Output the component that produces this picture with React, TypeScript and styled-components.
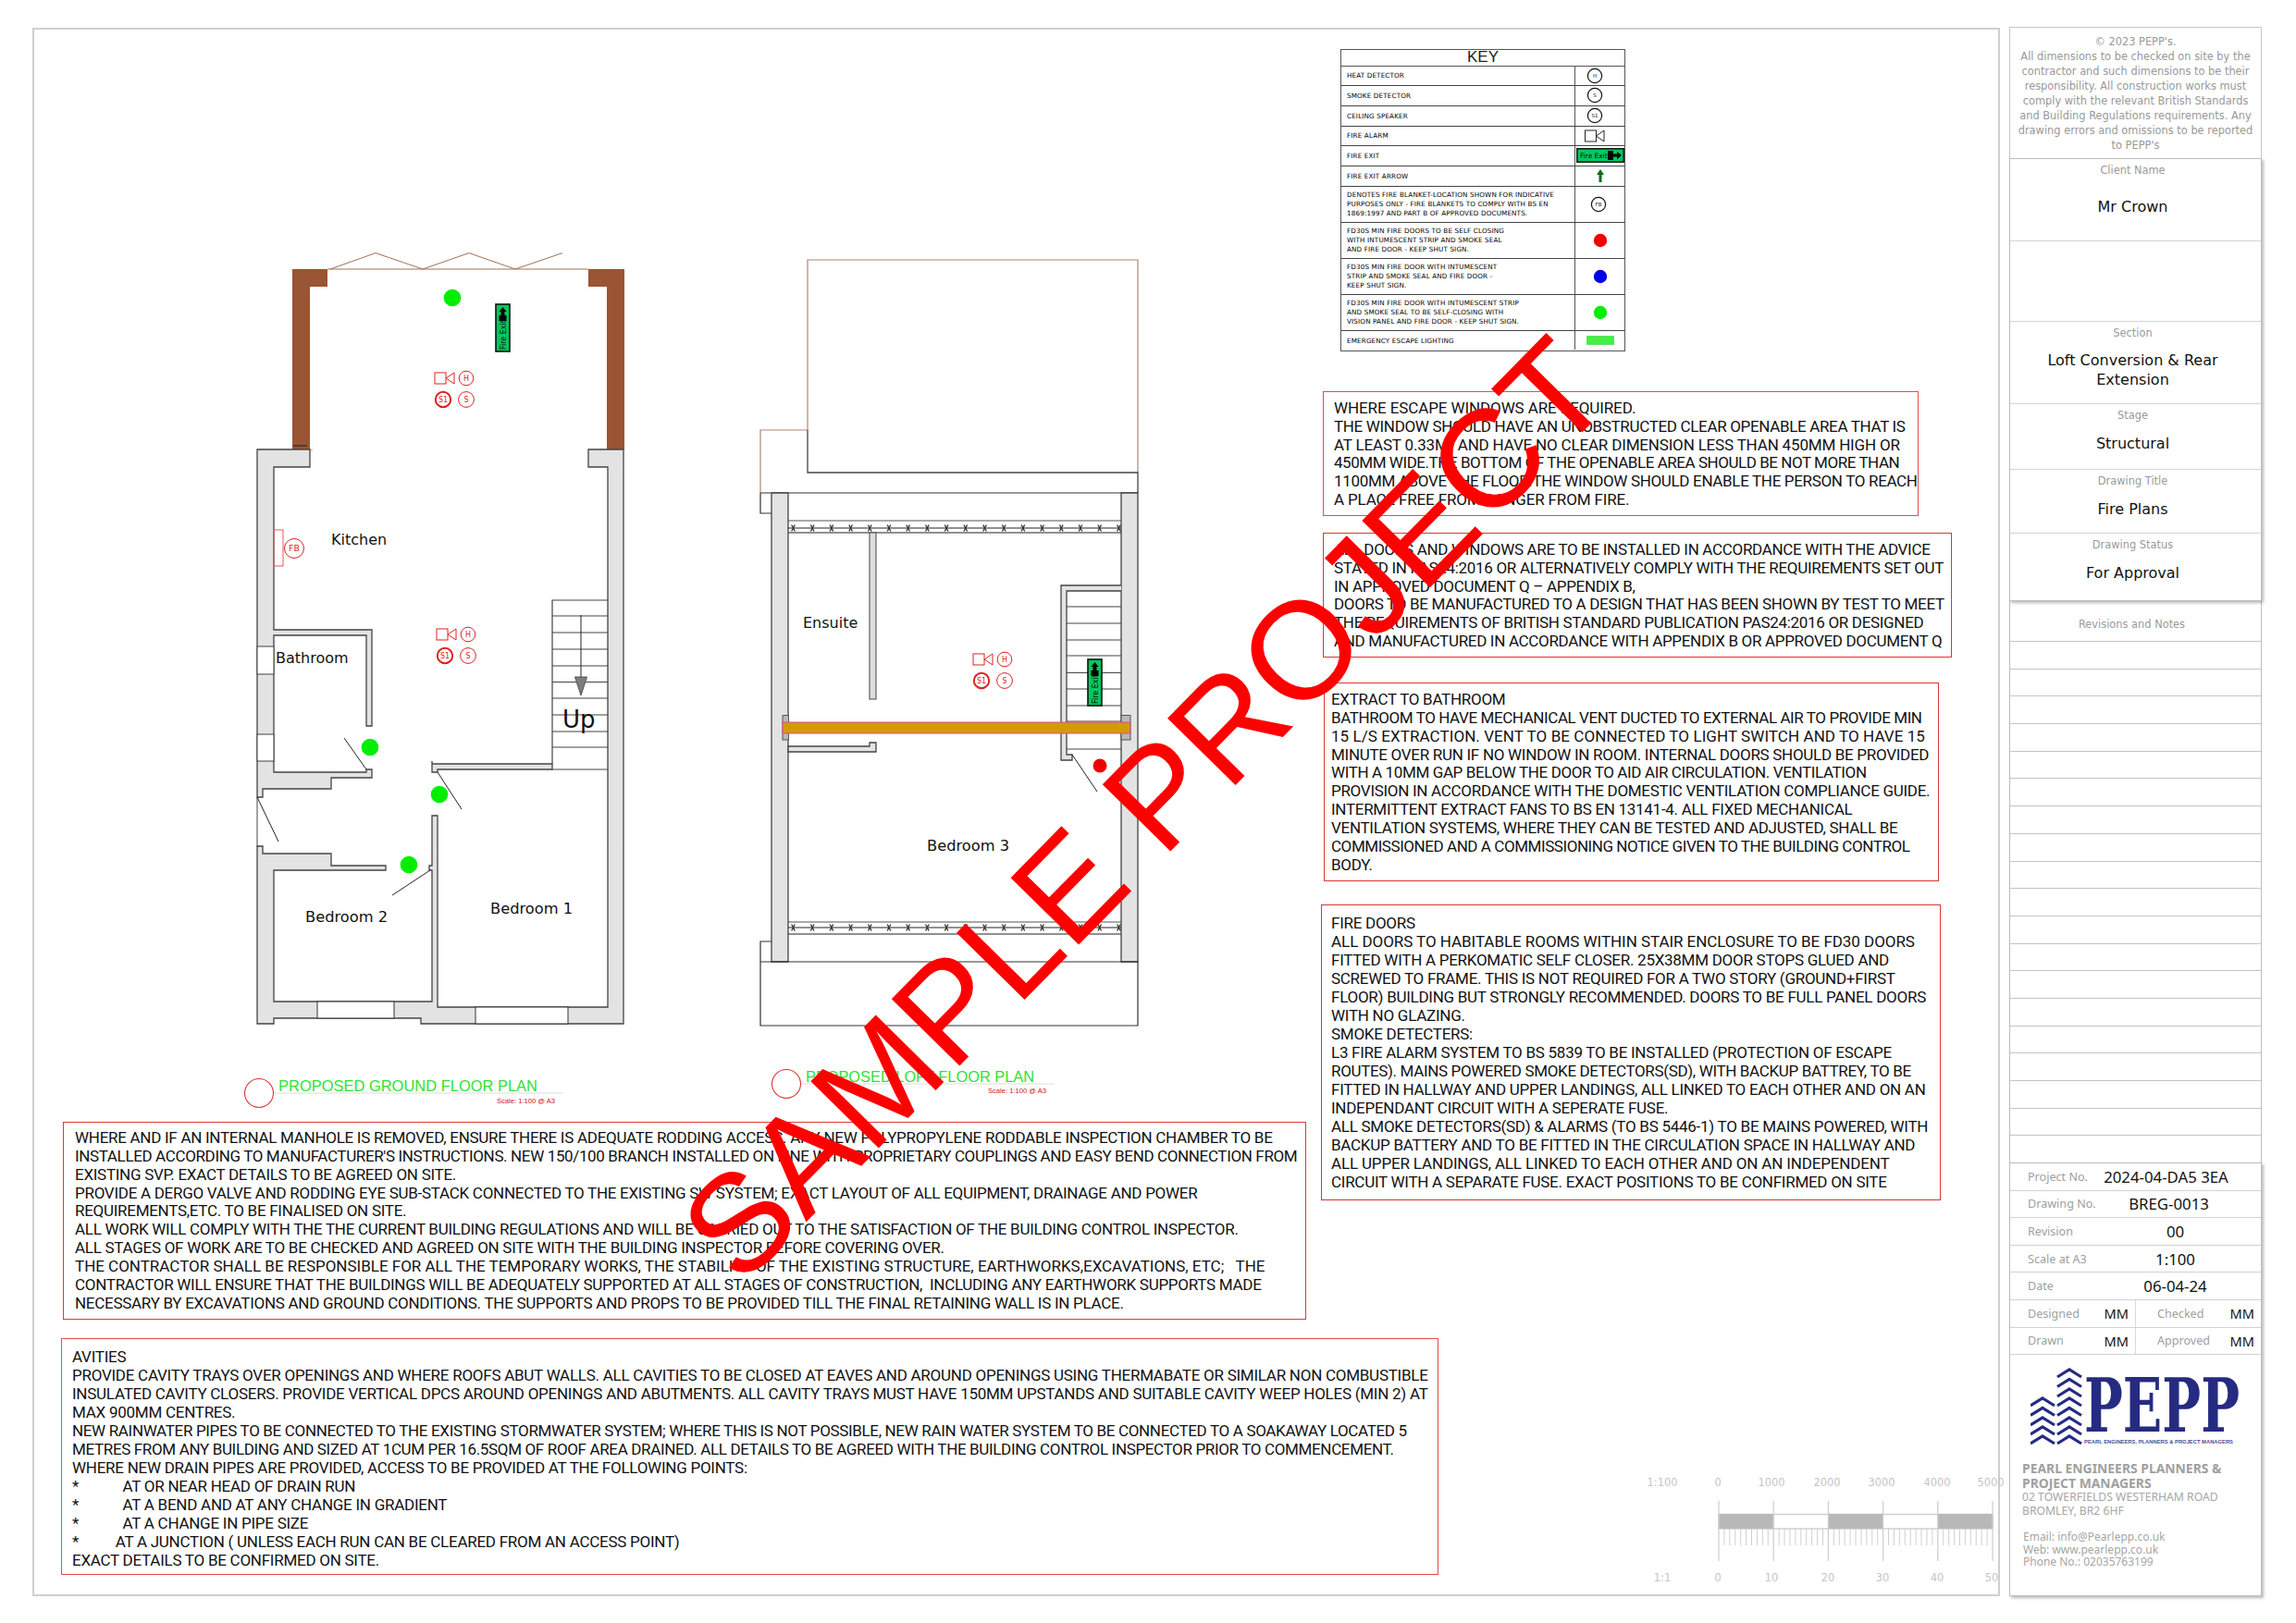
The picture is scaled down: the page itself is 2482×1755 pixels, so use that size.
import React from "react";
import styled, { createGlobalStyle } from "styled-components";

const Global = createGlobalStyle`
  html, body { margin: 0; padding: 0; background: #fff; }
  #root { width: 2482px; height: 1755px; }
`;

const Page = styled.div`
  position: relative;
  width: 2482px;
  height: 1755px;
  background: #fff;
  box-sizing: border-box;
  padding: 29px 37px 29px 35px;
  display: flex;
  gap: 10px;
  overflow: hidden;
  font-family: "DejaVu Sans", sans-serif;
`;

const Sheet = styled.div`
  box-sizing: border-box;
  width: 2127px;
  margin-top: 1px;
  height: 1696px;
  border: 2px solid #cfcfcf;
  display: grid;
  grid-template-columns: 1388px 735px;
`;

const LeftColumn = styled.div`
  display: flex;
  flex-direction: column;
  min-width: 0;
`;

const RightColumn = styled.div`
  display: flex;
  flex-direction: column;
  padding-top: 21px;
`;

const PlanSvg = styled.svg`
  display: block;
  flex: none;
  overflow: visible;
`;

const Note = styled.div<{ $w: number; $h: number; $ml: number; $mt: number; $pt: number; $pl: number; $ls: number; $c: string; $lh?: number }>`
  box-sizing: border-box;
  flex: none;
  width: ${(p) => p.$w}px;
  height: ${(p) => p.$h}px;
  margin-left: ${(p) => p.$ml}px;
  margin-top: ${(p) => p.$mt}px;
  padding: ${(p) => p.$pt}px 0 0 ${(p) => p.$pl}px;
  border: 1.5px solid ${(p) => p.$c};
  background: transparent;
  font-family: Roboto, "Liberation Sans", sans-serif;
  font-size: 17px;
  line-height: ${(p) => p.$lh ?? 20}px;
  letter-spacing: ${(p) => p.$ls}px;
  color: #111;
`;

const NoteLine = styled.div<{ $ls?: number }>`
  white-space: pre;
  ${(p) => (p.$ls === undefined ? "" : `letter-spacing: ${p.$ls}px;`)}
`;

const KeyTable = styled.div`
  box-sizing: border-box;
  flex: none;
  width: 308px;
  height: 327px;
  margin-left: 24px;
  border: 1.5px solid #555;
  display: flex;
  flex-direction: column;
`;

const KeyHeader = styled.div`
  box-sizing: border-box;
  height: 17.5px;
  border-bottom: 1.5px solid #555;
  text-align: center;
  font-family: "Liberation Sans", sans-serif;
  font-size: 17px;
  line-height: 15px;
  color: #222;
`;

const KeyRow = styled.div<{ $h: number }>`
  box-sizing: border-box;
  height: ${(p) => p.$h}px;
  display: grid;
  grid-template-columns: 253px 1fr;
  border-bottom: 1.5px solid #444;
  &:last-child { border-bottom: 0; }
`;

const KeyLabel = styled.div`
  box-sizing: border-box;
  padding: 1.5px 0 0 6px;
  border-right: 1.5px solid #555;
  display: flex;
  align-items: center;
  white-space: pre-line;
  font-family: "DejaVu Sans", sans-serif;
  font-size: 7.2px;
  line-height: 10px;
  letter-spacing: 0.15px;
  color: #000;
`;

const KeySymbol = styled.div<{ $shift?: number }>`
  display: flex;
  align-items: center;
  justify-content: center;
  padding-right: ${(p) => p.$shift ?? 0}px;
`;

const ScaleSvg = styled.svg`
  display: block;
  flex: none;
  margin: auto 0 9px 310px;
  overflow: visible;
`;

const TitleColumn = styled.div`
  flex: none;
  width: 273px;
  height: 1697px;
  display: flex;
  flex-direction: column;
`;

const Copyright = styled.div`
  box-sizing: border-box;
  height: 142px;
  border: 1.5px solid #c6c6c6;
  border-bottom: 0;
  padding: 6.5px 0 0 0;
  text-align: center;
  font-size: 11.4px;
  line-height: 16px;
  color: #999;
  white-space: pre;
`;

const Card = styled.div<{ $h?: number }>`
  box-sizing: border-box;
  ${(p) => (p.$h ? `height: ${p.$h}px;` : "flex: 1;")}
  border: 1px solid #bdbdbd;
  box-shadow: 2px 2px 3px rgba(0, 0, 0, 0.28);
  display: flex;
  flex-direction: column;
  position: relative;
  background: #fff;
`;

const InfoBlock = styled.div<{ $h: number }>`
  box-sizing: border-box;
  height: ${(p) => p.$h}px;
  border-bottom: 1.5px solid #d4d4d4;
  &:last-child { border-bottom: 0; }
  padding: 0 30px 0 24px;
  text-align: center;
`;

const InfoLabel = styled.div`
  font-size: 11.4px;
  line-height: 14px;
  padding-top: 5px;
  color: #9a9a9a;
`;

const InfoValue = styled.div<{ $mt: number }>`
  margin-top: ${(p) => p.$mt}px;
  font-size: 16px;
  line-height: 21px;
  color: #111;
`;

const Revisions = styled.div`
  box-sizing: border-box;
  height: 607px;
  border-left: 1.5px solid #bdbdbd;
  border-right: 1.5px solid #bdbdbd;
  display: flex;
  flex-direction: column;
`;

const RevisionsHeader = styled.div`
  height: 43px;
  padding-right: 8px;
  flex: none;
  text-align: center;
  font-size: 11.4px;
  line-height: 50px;
  color: #9a9a9a;
`;

const RevisionRow = styled.div`
  flex: 1;
  border-top: 1px solid #c4c4c4;
`;

const FactRow = styled.div`
  box-sizing: border-box;
  height: 29.6px;
  flex: none;
  padding-left: 19px;
  border-bottom: 1.5px solid #d2d2d2;
  display: flex;
  align-items: center;
  font-family: "Noto Sans", sans-serif;
`;

const FactLabel = styled.span`
  font-size: 12.6px;
  color: #a0a0a0;
  width: 66px;
  white-space: nowrap;
`;

const FactValue = styled.span<{ $shift?: number }>`
  flex: 1;
  text-align: center;
  padding-right: ${(p) => p.$shift ?? 0}px;
  padding-left: 1px;
  font-size: 16.8px;
  color: #111;
  white-space: nowrap;
`;

const SplitRow = styled.div`
  box-sizing: border-box;
  height: 29.6px;
  flex: none;
  display: grid;
  grid-template-columns: 135px 1fr;
  border-bottom: 1.5px solid #d2d2d2;
  font-family: "Noto Sans", sans-serif;
`;

const SplitCell = styled.div<{ $pl: number; $right?: boolean }>`
  display: flex;
  align-items: center;
  justify-content: space-between;
  padding: 0 7px 0 ${(p) => p.$pl}px;
  ${(p) => (p.$right ? "border-left: 1.5px solid #d8d8d8;" : "")}
  font-size: 12.6px;
  color: #a0a0a0;
`;

const Initials = styled.span`
  font-size: 14.6px;
  color: #111;
`;

const LogoSvg = styled.svg`
  display: block;
  flex: none;
  margin: 12px 0 0 22px;
`;

const Firm = styled.div`
  margin: 13px 0 0 13px;
  font-family: "Noto Sans", sans-serif;
  color: #a6a6a6;
`;

const FirmName = styled.div`
  font-size: 13.9px;
  font-weight: 700;
  line-height: 15.6px;
  white-space: pre-line;
  color: #a0a0a0;
`;

const FirmAddress = styled.div`
  margin-top: -0.5px;
  font-size: 12.2px;
  line-height: 15.6px;
  white-space: pre-line;
`;

const FirmContact = styled.div`
  margin: 13px 0 0 1px;
  font-size: 12px;
  line-height: 13.5px;
  white-space: pre-line;
`;

const Stamp = styled.div`
  position: absolute;
  left: 801px;
  top: 1266px;
  font-family: "Liberation Sans", Arial, sans-serif;
  font-size: 150px;
  line-height: 1;
  color: #ff0000;
  white-space: nowrap;
  transform-origin: 0 127px;
  transform: rotate(-45.5deg);
  pointer-events: none;
`;

type L = string | [string, number];

const A: L[] = [["WHERE ESCAPE WINDOWS ARE REQUIRED.", -0.1],"THE WINDOW SHOULD HAVE AN UNOBSTRUCTED CLEAR OPENABLE AREA THAT IS",["AT LEAST 0.33M² AND HAVE NO CLEAR DIMENSION LESS THAN 450MM HIGH OR", -0.175],["450MM WIDE.THE BOTTOM OF THE OPENABLE AREA SHOULD BE NOT MORE THAN", -0.455],"1100MM ABOVE THE FLOOR.THE WINDOW SHOULD ENABLE THE PERSON TO REACH",["A PLACE FREE FROM DANGER FROM FIRE.", -0.155]];
const B: L[] = ["ALL DOORS AND WINDOWS ARE TO BE INSTALLED IN ACCORDANCE WITH THE ADVICE","STATED IN PAS24:2016 OR ALTERNATIVELY COMPLY WITH THE REQUIREMENTS SET OUT","IN APPROVED DOCUMENT Q – APPENDIX B,","DOORS TO BE MANUFACTURED TO A DESIGN THAT HAS BEEN SHOWN BY TEST TO MEET","THE REQUIREMENTS OF BRITISH STANDARD PUBLICATION PAS24:2016 OR DESIGNED","AND MANUFACTURED IN ACCORDANCE WITH APPENDIX B OR APPROVED DOCUMENT Q"];
const C: L[] = ["EXTRACT TO BATHROOM",["BATHROOM TO HAVE MECHANICAL VENT DUCTED TO EXTERNAL AIR TO PROVIDE MIN", -0.42],["15 L/S EXTRACTION. VENT TO BE CONNECTED TO LIGHT SWITCH AND TO HAVE 15", 0.07],"MINUTE OVER RUN IF NO WINDOW IN ROOM. INTERNAL DOORS SHOULD BE PROVIDED",["WITH A 10MM GAP BELOW THE DOOR TO AID AIR CIRCULATION. VENTILATION", -0.38],"PROVISION IN ACCORDANCE WITH THE DOMESTIC VENTILATION COMPLIANCE GUIDE.","INTERMITTENT EXTRACT FANS TO BS EN 13141-4. ALL FIXED MECHANICAL","VENTILATION SYSTEMS, WHERE THEY CAN BE TESTED AND ADJUSTED, SHALL BE",["COMMISSIONED AND A COMMISSIONING NOTICE GIVEN TO THE BUILDING CONTROL", -0.44],"BODY."];
const D: L[] = ["FIRE DOORS",["ALL DOORS TO HABITABLE ROOMS WITHIN STAIR ENCLOSURE TO BE FD30 DOORS", -0.05],"FITTED WITH A PERKOMATIC SELF CLOSER. 25X38MM DOOR STOPS GLUED AND","SCREWED TO FRAME. THIS IS NOT REQUIRED FOR A TWO STORY (GROUND+FIRST","FLOOR) BUILDING BUT STRONGLY RECOMMENDED. DOORS TO BE FULL PANEL DOORS","WITH NO GLAZING.","SMOKE DETECTERS:","L3 FIRE ALARM SYSTEM TO BS 5839 TO BE INSTALLED (PROTECTION OF ESCAPE",["ROUTES). MAINS POWERED SMOKE DETECTORS(SD), WITH BACKUP BATTREY, TO BE", -0.35],"FITTED IN HALLWAY AND UPPER LANDINGS, ALL LINKED TO EACH OTHER AND ON AN","INDEPENDANT CIRCUIT WITH A SEPERATE FUSE.","ALL SMOKE DETECTORS(SD) & ALARMS (TO BS 5446-1) TO BE MAINS POWERED, WITH","BACKUP BATTERY AND TO BE FITTED IN THE CIRCULATION SPACE IN HALLWAY AND",["ALL UPPER LANDINGS, ALL LINKED TO EACH OTHER AND ON AN INDEPENDENT", -0.16],"CIRCUIT WITH A SEPARATE FUSE. EXACT POSITIONS TO BE CONFIRMED ON SITE"];
const E: L[] = ["WHERE AND IF AN INTERNAL MANHOLE IS REMOVED, ENSURE THERE IS ADEQUATE RODDING ACCESS. ANY NEW POLYPROPYLENE RODDABLE INSPECTION CHAMBER TO BE",["INSTALLED ACCORDING TO MANUFACTURER'S INSTRUCTIONS. NEW 150/100 BRANCH INSTALLED ON LINE WITH PROPRIETARY COUPLINGS AND EASY BEND CONNECTION FROM", -0.365],"EXISTING SVP. EXACT DETAILS TO BE AGREED ON SITE.","PROVIDE A DERGO VALVE AND RODDING EYE SUB-STACK CONNECTED TO THE EXISTING SW SYSTEM; EXACT LAYOUT OF ALL EQUIPMENT, DRAINAGE AND POWER","REQUIREMENTS,ETC. TO BE FINALISED ON SITE.","ALL WORK WILL COMPLY WITH THE THE CURRENT BUILDING REGULATIONS AND WILL BE CARRIED OUT TO THE SATISFACTION OF THE BUILDING CONTROL INSPECTOR.","ALL STAGES OF WORK ARE TO BE CHECKED AND AGREED ON SITE WITH THE BUILDING INSPECTOR BEFORE COVERING OVER.",["THE CONTRACTOR SHALL BE RESPONSIBLE FOR ALL THE TEMPORARY WORKS, THE STABILITY OF THE EXISTING STRUCTURE, EARTHWORKS,EXCAVATIONS, ETC;   THE", -0.01],"CONTRACTOR WILL ENSURE THAT THE BUILDINGS WILL BE ADEQUATELY SUPPORTED AT ALL STAGES OF CONSTRUCTION,  INCLUDING ANY EARTHWORK SUPPORTS MADE","NECESSARY BY EXCAVATIONS AND GROUND CONDITIONS. THE SUPPORTS AND PROPS TO BE PROVIDED TILL THE FINAL RETAINING WALL IS IN PLACE."];
const F: L[] = ["AVITIES","PROVIDE CAVITY TRAYS OVER OPENINGS AND WHERE ROOFS ABUT WALLS. ALL CAVITIES TO BE CLOSED AT EAVES AND AROUND OPENINGS USING THERMABATE OR SIMILAR NON COMBUSTIBLE","INSULATED CAVITY CLOSERS. PROVIDE VERTICAL DPCS AROUND OPENINGS AND ABUTMENTS. ALL CAVITY TRAYS MUST HAVE 150MM UPSTANDS AND SUITABLE CAVITY WEEP HOLES (MIN 2) AT","MAX 900MM CENTRES.",["NEW RAINWATER PIPES TO BE CONNECTED TO THE EXISTING STORMWATER SYSTEM; WHERE THIS IS NOT POSSIBLE, NEW RAIN WATER SYSTEM TO BE CONNECTED TO A SOAKAWAY LOCATED 5", -0.34],["METRES FROM ANY BUILDING AND SIZED AT 1CUM PER 16.5SQM OF ROOF AREA DRAINED. ALL DETAILS TO BE AGREED WITH THE BUILDING CONTROL INSPECTOR PRIOR TO COMMENCEMENT.", -0.35],"WHERE NEW DRAIN PIPES ARE PROVIDED, ACCESS TO BE PROVIDED AT THE FOLLOWING POINTS:","*            AT OR NEAR HEAD OF DRAIN RUN","*            AT A BEND AND AT ANY CHANGE IN GRADIENT","*            AT A CHANGE IN PIPE SIZE","*          AT A JUNCTION ( UNLESS EACH RUN CAN BE CLEARED FROM AN ACCESS POINT)","EXACT DETAILS TO BE CONFIRMED ON SITE."];

const lines = (items: L[]) =>
  items.map((t, i) => (typeof t === "string" ? <NoteLine key={i}>{t}</NoteLine> : <NoteLine key={i} $ls={t[1]}>{t[0]}</NoteLine>));

const WALL = { fill: "#e3e3e3", stroke: "#444", strokeWidth: 1.3 };
const INK = { stroke: "#222", strokeWidth: 1, fill: "none" };
const RED = "#dd2222";

const Sym = ({ x, y, r, t, w = 1, c = RED, s = 8 }: { x: number; y: number; r: number; t: string; w?: number; c?: string; s?: number }) => (
  <g>
    <circle cx={x} cy={y} r={r} fill="#fff" stroke={c} strokeWidth={w} />
    <text x={x} y={y + s * 0.36} textAnchor="middle" fontSize={s} fontFamily="DejaVu Sans, sans-serif" fill={c}>{t}</text>
  </g>
);

const AlarmSet = ({ x, y }: { x: number; y: number }) => (
  <g transform={`translate(${x} ${y})`}>
    <rect x="0" y="0" width="12" height="12" fill="none" stroke={RED} strokeWidth="1" />
    <path d="M12 6 L21 0 L21 12 Z" fill="none" stroke={RED} strokeWidth="1" />
    <Sym x={34} y={6} r={7.8} t="H" />
    <Sym x={9} y={29} r={8.2} t="S1" w={2} />
    <Sym x={34} y={29} r={8.4} t="S" />
  </g>
);

const ExitSign = ({ x, y, h }: { x: number; y: number; h: number }) => (
  <g transform={`translate(${x} ${y})`}>
    <rect x="0" y="0" width="15" height={h} fill="#00c85f" stroke="#111" strokeWidth="1.6" />
    <path d="M7.5 3 L11.5 8 L9.5 8 L9.5 12 L5.5 12 L5.5 8 L3.5 8 Z" fill="#000" />
    <rect x="3.5" y="12" width="8" height="6" fill="#000" />
    <text transform={`translate(10.5 ${h - 2}) rotate(-90)`} fontSize="8" fontFamily="DejaVu Sans, sans-serif" fill="#111">Fire Exit</text>
  </g>
);

const PlanTitle = ({ cx, cy, tx, ty, tw, t, ux2, sx, sy }: { cx: number; cy: number; tx: number; ty: number; tw: number; t: string; ux2: number; sx: number; sy: number }) => (
  <g>
    <circle cx={cx} cy={cy} r={15.5} fill="#fff" stroke="#dd3333" strokeWidth="1.1" />
    <line x1={cx + 16} y1={cy} x2={ux2} y2={cy} stroke="#e8e8e8" strokeWidth="1.5" />
    <text x={tx} y={ty} fontSize="17" fontFamily="Liberation Sans, sans-serif" fill="#2fe22f" textLength={tw} lengthAdjust="spacingAndGlyphs">{t}</text>
    <text x={sx} y={sy} fontSize="7.6" fontFamily="Liberation Sans, sans-serif" fill="#cc1111">Scale: 1:100 @ A3</text>
  </g>
);

const Room = ({ x, y, t, s = 16 }: { x: number; y: number; t: string; s?: number }) => (
  <text x={x} y={y} fontSize={s} fontFamily="DejaVu Sans, sans-serif" fill="#111">{t}</text>
);

const Joists = ({ top, mid, bottom }: { top: number; mid: number; bottom: number }) => (
  <g>
    <line x1="852" y1={top} x2="1212" y2={top} stroke="#555" strokeWidth="1.2" />
    <line x1="852" y1={mid} x2="1212" y2={mid} stroke="#222" strokeWidth="1" />
    <line x1="852" y1={bottom} x2="1212" y2={bottom} stroke="#222" strokeWidth="1.2" />
    {Array.from({ length: 18 }, (_, i) => 857.5 + i * 20.7).map((x) => (
      <path key={x} d={`M${x - 1.8} ${mid - 3.5} L${x + 1.8} ${mid + 3.5} M${x + 1.8} ${mid - 3.5} L${x - 1.8} ${mid + 3.5}`} stroke="#3a3020" strokeWidth="1.3" />
    ))}
  </g>
);

const Plans = () => (
  <PlanSvg width={1388} height={1181} viewBox="37 32 1388 1181">
    <path d="M316 291 H354 V310 H335 V486 H316 Z M636 291 H675 V486 H656 V310 H636 Z" fill="#9a5534" />
    <path d="M354 291 H636 M357 291 L406 273.6 L457 291 L507 273.6 L557 291 L608 273.6" stroke="#a07058" strokeWidth="1" fill="none" />
    <line x1="308" y1="486.5" x2="338" y2="486.5" stroke="#d8c040" strokeWidth="1" />
    <line x1="317" y1="482" x2="332" y2="482" stroke="#222" strokeWidth="1" />
    <path {...WALL} d="M278 486 H335 V505 H296 V681 H402 V785 H396 V687 H296 V835 H396 V832 H402 V841 H358 V853 H284 V862 H278 Z" />
    <path {...WALL} d="M278 915 H284 V923 H358 V936 H417 V941 H296 V1083 H467 V941 H464 V936 H467 V882 H473 V1089 H657 V505 H636 V486 H674 V1107 H455 V1101 H296 V1107 H278 Z" />
    <path {...WALL} d="M467 823 V826 H597 V832 H473 V835 H467 Z" />
    <rect x="278" y="699" width="18" height="30" fill="#fff" stroke="#444" />
    <rect x="278" y="794" width="18" height="29" fill="#fff" stroke="#444" />
    <rect x="343" y="1083" width="83" height="18" fill="#fff" stroke="#333" />
    <rect x="514" y="1089" width="100" height="18" fill="#fff" stroke="#333" />
    <line x1="278" y1="862" x2="278" y2="915" stroke="#444" />
    <path d="M597 826 V649 H657" {...INK} stroke="#444" strokeWidth="1.2" />
    {[666, 684, 702, 720, 737.5, 755, 773, 791, 808].map((y) => <line key={y} x1="597" y1={y} x2="657" y2={y} stroke="#444" strokeWidth="1.1" />)}
    <line x1="597" y1="832" x2="657" y2="832" stroke="#444" strokeWidth="1.1" />
    <line x1="628" y1="665" x2="628" y2="735" stroke="#222" strokeWidth="1" />
    <path d="M621.5 732 H634.5 L628 752 Z" fill="#7d7d7d" stroke="#555" />
    <Room x={608} y={787} t="Up" s={26} />
    <path {...INK} d="M372 798 L396 832 M473 835 L499 875 M465 941 L424 968 M278 862 L301 910" />
    <circle cx="489" cy="322" r="9.3" fill="#00ee00" />
    <circle cx="400" cy="808" r="9.3" fill="#00ee00" />
    <circle cx="475" cy="859" r="9.3" fill="#00ee00" />
    <circle cx="442" cy="935" r="9.3" fill="#00ee00" />
    <ExitSign x={536} y={329} h={51} />
    <AlarmSet x={470} y={403} />
    <AlarmSet x={472} y={680} />
    <rect x="296" y="573" width="10" height="39" fill="none" stroke="#ee5555" />
    <Sym x={318} y={593} r={10.5} t="FB" s={9.5} />
    <Room x={358} y={589} t="Kitchen" />
    <Room x={298} y={717} t="Bathroom" />
    <Room x={330} y={997} t="Bedroom 2" s={16.3} />
    <Room x={530} y={988} t="Bedroom 1" s={16.3} />
    <PlanTitle cx={280} cy={1182} tx={301} ty={1180} tw={280} t="PROPOSED GROUND FLOOR PLAN" ux2={609} sx={537} sy={1193} />

    <path d="M873 465 V281 H1230 V511" fill="none" stroke="#b08570" strokeWidth="1.2" />
    <path d="M822 533 V465 H873" fill="none" stroke="#b08570" strokeWidth="1.2" />
    <path d="M873 465 V511 H1230 V533" fill="none" stroke="#444" strokeWidth="1.3" />
    <path d="M822 533 H1230 M822 533 V555 H834" fill="none" stroke="#333" strokeWidth="1.2" />
    <path {...WALL} d="M834 533 H852 V1040 H834 Z" />
    <path {...WALL} d="M1212 533 H1230 V1040 H1212 Z" />
    <Joists top={563} mid={571} bottom={576} />
    <Joists top={997} mid={1003} bottom={1010} />
    <rect x="940" y="576" width="7" height="180" fill="#dedede" stroke="#444" />
    <path {...WALL} d="M852 807 H940 V803 H947 V813 H852 Z" />
    <path d="M1212 633 H1147 V822 H1159 V816 H1153 V639 H1212" {...WALL} />
    {[656, 674, 692, 709, 727.5, 745, 763, 780, 810].map((y) => <line key={y} x1="1153" y1={y} x2="1212" y2={y} stroke="#444" strokeWidth="1.1" />)}
    <line x1="1159" y1="816" x2="1186" y2="856" {...INK} />
    <circle cx="1189" cy="828" r="7.5" fill="#f00000" />
    <rect x="846" y="773.5" width="6.5" height="26.5" fill="#b9b9b9" stroke="#555" />
    <rect x="1212" y="773.5" width="10" height="26.5" fill="#b9b9b9" stroke="#555" />
    <rect x="846" y="781" width="376" height="12" fill="#d39b00" stroke="#e0479f" strokeWidth="1" />
    <path d="M822 1040 H1230 V1109 H822 Z M822 1040 V1018 H834" fill="none" stroke="#333" strokeWidth="1.2" />
    <ExitSign x={1176} y={713} h={50} />
    <AlarmSet x={1052} y={707} />
    <Room x={868} y={679} t="Ensuite" />
    <Room x={1002} y={920} t="Bedroom 3" s={16.3} />
    <PlanTitle cx={850} cy={1172} tx={871} ty={1170} tw={247} t="PROPOSED LOFT FLOOR PLAN" ux2={1140} sx={1068} sy={1182} />
  </PlanSvg>
);

const SMALL = { fontFamily: "DejaVu Sans, sans-serif" };

const ScaleBar = () => {
  const majors = [1858, 1917.2, 1976.4, 2035.6, 2094.8, 2154];
  return (
    <ScaleSvg width={430} height={125} viewBox="1735 1590 430 125">
      {[[1797, "1:100"], [1857, "0"], [1915, "1000"], [1975, "2000"], [2034, "3000"], [2094, "4000"], [2152, "5000"]].map(([x, t]) => (
        <text key={String(t)} x={x as number} y={1607} textAnchor="middle" fontSize="11.4" fill="#c4c4c4" {...SMALL}>{t}</text>
      ))}
      {[[1797, "1:1"], [1857, "0"], [1915, "10"], [1976, "20"], [2035, "30"], [2094, "40"], [2153, "50"]].map(([x, t]) => (
        <text key={String(t)} x={x as number} y={1710} textAnchor="middle" fontSize="11.4" fill="#c4c4c4" {...SMALL}>{t}</text>
      ))}
      <rect x="1858" y="1637.5" width="296" height="15.5" fill="none" stroke="#d0d0d0" strokeWidth="1.5" />
      {[0, 2, 4].map((i) => <rect key={i} x={majors[i]} y="1637" width="59.5" height="16" fill="#b8b8b8" />)}
      {majors.map((x) => <line key={x} x1={x} y1="1623" x2={x} y2="1688" stroke="#cfcfcf" strokeWidth="1.3" />)}
      {Array.from({ length: 50 }, (_, i) => 1858 + i * 5.92).filter((_, i) => i % 10 !== 0).map((x) => (
        <line key={x} x1={x} y1="1653" x2={x} y2="1671" stroke="#d0d0d0" strokeWidth="1" />
      ))}
    </ScaleSvg>
  );
};

const Chevrons = ({ x, tops }: { x: number; tops: number[] }) => (
  <g fill="none" stroke="#262b82" strokeWidth="3.2">
    {tops.map((y) => <path key={y} d={`M${x - 13} ${y + 10} L${x} ${y + 2} L${x + 13} ${y + 10}`} />)}
  </g>
);

const Logo = () => (
  <LogoSvg width={230} height={90} viewBox="2195 1474 230 90">
    <Chevrons x={2208} tops={[1507, 1517.5, 1528, 1538, 1548]} />
    <Chevrons x={2237} tops={[1476, 1486.5, 1497, 1507, 1517.5, 1528, 1538, 1548]} />
    <text x="2253" y="1545" fontSize="81" fontWeight="700" fontFamily="DejaVu Serif, serif" fill="#262b82" textLength="168" lengthAdjust="spacingAndGlyphs">PEPP</text>
    <text x="2253" y="1558" fontSize="5.6" fontWeight="700" fontFamily="Liberation Sans, sans-serif" fill="#4a4e96" textLength="161" lengthAdjust="spacingAndGlyphs">PEARL ENGINEERS, PLANNERS &amp; PROJECT MANAGERS</text>
  </LogoSvg>
);

const Circle = ({ t }: { t: string }) => (
  <svg width="18" height="18" viewBox="0 0 18 18">
    <circle cx="9" cy="9" r="7.6" fill="none" stroke="#111" strokeWidth="1.2" />
    <text x="9" y="11" textAnchor="middle" fontSize="5.5" fontFamily="DejaVu Sans, sans-serif" fill="#111">{t}</text>
  </svg>
);

const Dot = ({ c }: { c: string }) => (
  <svg width="16" height="16" viewBox="0 0 16 16"><circle cx="8" cy="8" r="7.2" fill={c} /></svg>
);

const keyRows: { h: number; label: string; icon: React.ReactNode; shift?: number }[] = [
  { h: 21, label: "HEAT DETECTOR", icon: <Circle t="H" />, shift: 12 },
  { h: 22, label: "SMOKE DETECTOR", icon: <Circle t="S" />, shift: 12 },
  { h: 22, label: "CEILING SPEAKER", icon: <Circle t="S1" />, shift: 12 },
  { h: 21, label: "FIRE ALARM", icon: (
    <svg width="22" height="14" viewBox="0 0 22 14"><rect x="0.5" y="1" width="12" height="12" fill="none" stroke="#222" /><path d="M12.5 7 L21 1 V13 Z" fill="none" stroke="#222" /></svg>
  ), shift: 12 },
  { h: 22, label: "FIRE EXIT", icon: (
    <svg width="52" height="16" viewBox="0 0 52 16"><rect x="0.8" y="0.8" width="50.4" height="14.4" fill="#00c85f" stroke="#111" strokeWidth="1.5" /><text x="4" y="10.5" fontSize="7.4" fontFamily="DejaVu Sans, sans-serif" fill="#111">Fire Exit</text><rect x="34" y="3" width="6" height="10" fill="#000" /><path d="M40 6.5 H44 V4 L49 8 L44 12 V9.5 H40 Z" fill="#000" /></svg>
  ) },
  { h: 22, label: "FIRE EXIT ARROW", icon: (
    <svg width="10" height="16" viewBox="0 0 10 16"><path d="M5 1 L9 7 H6.5 V15 H3.5 V7 H1 Z" fill="#0b6b14" /></svg>
  ) },
  { h: 39, label: "DENOTES FIRE BLANKET-LOCATION SHOWN FOR INDICATIVE\nPURPOSES ONLY - FIRE BLANKETS TO COMPLY WITH BS EN\n1869:1997 AND PART B OF APPROVED DOCUMENTS.", icon: <Circle t="FB" />, shift: 3 },
  { h: 39, label: "FD30S MIN FIRE DOORS TO BE SELF CLOSING\nWITH INTUMESCENT STRIP AND SMOKE SEAL\nAND FIRE DOOR - KEEP SHUT SIGN.", icon: <Dot c="#f40000" /> },
  { h: 39, label: "FD30S MIN FIRE DOOR WITH INTUMESCENT\nSTRIP AND SMOKE SEAL AND FIRE DOOR -\nKEEP SHUT SIGN.", icon: <Dot c="#0000e6" /> },
  { h: 39, label: "FD30S MIN FIRE DOOR WITH INTUMESCENT STRIP\nAND SMOKE SEAL TO BE SELF-CLOSING WITH\nVISION PANEL AND FIRE DOOR - KEEP SHUT SIGN.", icon: <Dot c="#00ee00" /> },
  { h: 20.5, label: "EMERGENCY ESCAPE LIGHTING", icon: (
    <svg width="30" height="10" viewBox="0 0 30 10"><rect x="0.5" y="0.5" width="29" height="9" fill="#44f044" stroke="#66dd66" /></svg>
  ) },
];

const COPY = "© 2023 PEPP's.\nAll dimensions to be checked on site by the\ncontractor and such dimensions to be their\nresponsibility. All construction works must\ncomply with the relevant British Standards\nand Building Regulations requirements. Any\ndrawing errors and omissions to be reported\nto PEPP's";

export default function App() {
  return (
    <Page>
      <Global />
      <Sheet>
        <LeftColumn>
          <Plans />
          <Note $w={1344} $h={214} $ml={31} $mt={0} $pt={7} $pl={12} $ls={-0.28} $lh={19.85} $c="#d83a3a">{lines(E)}</Note>
          <Note $w={1489} $h={256} $ml={29} $mt={20} $pt={9} $pl={11} $ls={-0.26} $c="#e04b4b">{lines(F)}</Note>
        </LeftColumn>
        <RightColumn>
          <KeyTable>
            <KeyHeader>KEY</KeyHeader>
            {keyRows.map((r) => (
              <KeyRow key={r.label} $h={r.h}>
                <KeyLabel>{r.label}</KeyLabel>
                <KeySymbol $shift={r.shift}>{r.icon}</KeySymbol>
              </KeyRow>
            ))}
          </KeyTable>
          <Note $w={644} $h={135} $ml={5} $mt={43} $pt={8} $pl={11} $ls={-0.335} $lh={19.8} $c="#e24d4d">{lines(A)}</Note>
          <Note $w={680} $h={135} $ml={5} $mt={18} $pt={8} $pl={11} $ls={-0.32} $lh={19.8} $c="#d93535">{lines(B)}</Note>
          <Note $w={665} $h={215} $ml={6} $mt={27} $pt={8} $pl={7} $ls={-0.29} $lh={19.85} $c="#d93535">{lines(C)}</Note>
          <Note $w={670} $h={320} $ml={3} $mt={25} $pt={9} $pl={10} $ls={-0.27} $c="#d93535">{lines(D)}</Note>
          <ScaleBar />
        </RightColumn>
      </Sheet>
      <TitleColumn>
        <Copyright>{COPY}</Copyright>
        <Card $h={479}>
          <InfoBlock $h={89}><InfoLabel>Client Name</InfoLabel><InfoValue $mt={22}>Mr Crown</InfoValue></InfoBlock>
          <InfoBlock $h={88} />
          <InfoBlock $h={89}><InfoLabel>Section</InfoLabel><InfoValue $mt={12}>Loft Conversion &amp; Rear Extension</InfoValue></InfoBlock>
          <InfoBlock $h={71}><InfoLabel>Stage</InfoLabel><InfoValue $mt={13}>Structural</InfoValue></InfoBlock>
          <InfoBlock $h={70}><InfoLabel>Drawing Title</InfoLabel><InfoValue $mt={13}>Fire Plans</InfoValue></InfoBlock>
          <InfoBlock $h={72}><InfoLabel>Drawing Status</InfoLabel><InfoValue $mt={13}>For Approval</InfoValue></InfoBlock>
        </Card>
        <Revisions>
          <RevisionsHeader>Revisions and Notes</RevisionsHeader>
          {Array.from({ length: 19 }, (_, i) => <RevisionRow key={i} />)}
        </Revisions>
        <Card>
          <FactRow><FactLabel>Project No.</FactLabel><FactValue $shift={20}>2024-04-DA5 3EA</FactValue></FactRow>
          <FactRow><FactLabel>Drawing No.</FactLabel><FactValue $shift={14}>BREG-0013</FactValue></FactRow>
          <FactRow><FactLabel>Revision</FactLabel><FactValue>00</FactValue></FactRow>
          <FactRow><FactLabel>Scale at A3</FactLabel><FactValue>1:100</FactValue></FactRow>
          <FactRow><FactLabel>Date</FactLabel><FactValue>06-04-24</FactValue></FactRow>
          <SplitRow>
            <SplitCell $pl={19}>Designed<Initials>MM</Initials></SplitCell>
            <SplitCell $pl={23} $right>Checked<Initials>MM</Initials></SplitCell>
          </SplitRow>
          <SplitRow>
            <SplitCell $pl={19}>Drawn<Initials>MM</Initials></SplitCell>
            <SplitCell $pl={23} $right>Approved<Initials>MM</Initials></SplitCell>
          </SplitRow>
          <Logo />
          <Firm>
            <FirmName>{"PEARL ENGINEERS PLANNERS &\nPROJECT MANAGERS"}</FirmName>
            <FirmAddress>{"02 TOWERFIELDS WESTERHAM ROAD\nBROMLEY, BR2 6HF"}</FirmAddress>
            <FirmContact>{"Email: info@Pearlepp.co.uk\nWeb: www.pearlepp.co.uk\nPhone No.: 02035763199"}</FirmContact>
          </Firm>
        </Card>
      </TitleColumn>
      <Stamp>SAMPLE PROJECT</Stamp>
    </Page>
  );
}
